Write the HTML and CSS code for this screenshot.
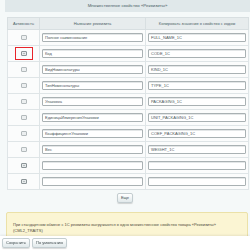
FILE: index.html
```html
<!DOCTYPE html>
<html lang="ru">
<head>
    <meta charset="UTF-8">
    <title>Реквизиты</title>
    <link rel="stylesheet" href="styles.css">
</head>
<body>
    <div class="content">
        <div class="heading">Множественное свойство «Реквизиты»</div>
        <table class="props">
            <tr>
                <th class="col-active">Активность</th>
                <th class="col-name">Название реквизита</th>
                <th class="col-code">Копировать значение в свойство с кодом</th>
            </tr>
            <tr>
                <td><span class="check"></span></td>
                <td><div class="field">Полное наименование</div></td>
                <td><div class="field">FULL_NAME_1C</div></td>
            </tr>
            <tr>
                <td><span class="mark"><span class="check checked"></span></span></td>
                <td><div class="field">Код</div></td>
                <td><div class="field">CODE_1C</div></td>
            </tr>
            <tr>
                <td><span class="check"></span></td>
                <td><div class="field">ВидНоменклатуры</div></td>
                <td><div class="field">KIND_1C</div></td>
            </tr>
            <tr>
                <td><span class="check"></span></td>
                <td><div class="field">ТипНоменклатуры</div></td>
                <td><div class="field">TYPE_1C</div></td>
            </tr>
            <tr>
                <td><span class="check"></span></td>
                <td><div class="field">Упаковка</div></td>
                <td><div class="field">PACKAGING_1C</div></td>
            </tr>
            <tr>
                <td><span class="check"></span></td>
                <td><div class="field">ЕдиницаИзмеренияУпаковки</div></td>
                <td><div class="field">UNIT_PACKAGING_1C</div></td>
            </tr>
            <tr>
                <td><span class="check"></span></td>
                <td><div class="field">КоэффициентУпаковки</div></td>
                <td><div class="field">COEF_PACKAGING_1C</div></td>
            </tr>
            <tr>
                <td><span class="check"></span></td>
                <td><div class="field">Вес</div></td>
                <td><div class="field">WEIGHT_1C</div></td>
            </tr>
            <tr>
                <td><span class="check checked"></span></td>
                <td><div class="field"></div></td>
                <td><div class="field"></div></td>
            </tr>
            <tr>
                <td><span class="check checked"></span></td>
                <td><div class="field"></div></td>
                <td><div class="field"></div></td>
            </tr>
        </table>
        <div class="more-row"><span class="btn">Еще</span></div>
        <div class="notice">При стандартном обмене с 1С реквизиты выгружаются в одно множественное свойство товара «Реквизиты» (CML2_TRAITS)</div>
    </div>
    <div class="footer">
        <span class="btn">Сохранить</span>
        <span class="btn">По умолчанию</span>
    </div>
</body>
</html>
```

FILE: styles.css
```css
body {
    margin: 0;
    font-family: 'Liberation Sans', Arial, sans-serif;
    font-size: 4px;
    color: #4a5558;
    background: #f5f9f9;
}
.content {
    padding-left: 5px;
}
.heading {
    height: 12px;
    line-height: 12px;
    background: #e0e8ea;
    text-align: center;
    font-size: 4.4px;
    color: #4b6267;
}
.props {
    margin: 5px 0 0 2px;
    width: 238px;
    border-collapse: collapse;
    table-layout: fixed;
}
.props th {
    height: 11px;
    padding: 0;
    background: #e7eced;
    border: 1px solid #d8dfe1;
    font-weight: normal;
    color: #4b6267;
}
.col-active { width: 31px; }
.col-name { width: 105px; }
.col-code { width: 102px; }
.props td {
    height: 15px;
    padding: 0 2px;
    background: #fbfcfc;
    border: 1px solid #dfe5e7;
    text-align: center;
}
.field {
    height: 7px;
    line-height: 7px;
    padding: 0 2px;
    background: #fff;
    border: 1px solid #a9b1b3;
    border-radius: 1px;
    box-shadow: inset 0 1px 0 #e3e6e7;
    text-align: left;
    white-space: nowrap;
    overflow: hidden;
}
.check {
    display: inline-block;
    width: 4px;
    height: 3px;
    vertical-align: middle;
    background: #eceff0;
    border: 1px solid #b3babc;
    border-radius: 1px;
}
.check.checked {
    background: #b4bcbe;
    border-color: #8b9497;
    box-shadow: inset 0 0 0 1px #e6eaeb;
}
.mark {
    display: inline-block;
    padding: 3px 5px;
    line-height: 0;
    border: 1px solid #e8242a;
}
.more-row {
    margin-top: 3px;
    padding-right: 5px;
    text-align: center;
}
.btn {
    display: inline-block;
    height: 8px;
    line-height: 8px;
    padding: 0 3px;
    background: linear-gradient(#fff, #e1e9eb);
    border: 1px solid #c3cdd0;
    border-radius: 2px;
    box-shadow: 0 1px 1px rgba(0, 0, 0, 0.15);
    color: #3f4b4e;
}
.notice {
    margin: 9px 2px 0 1px;
    padding: 9px 6px 10px;
    background: #fbf5d3;
    border: 1px solid #ebe1a8;
    border-radius: 2px;
    line-height: 6px;
    color: #4f4b3a;
}
.footer {
    position: fixed;
    left: 0;
    right: 0;
    bottom: 0;
    height: 14px;
    padding: 2px 0 0 2px;
    box-sizing: border-box;
    background: #fff;
    box-shadow: 0 -1px 2px rgba(0, 0, 0, 0.08);
}
.footer .btn {
    margin-right: 1px;
}
```
